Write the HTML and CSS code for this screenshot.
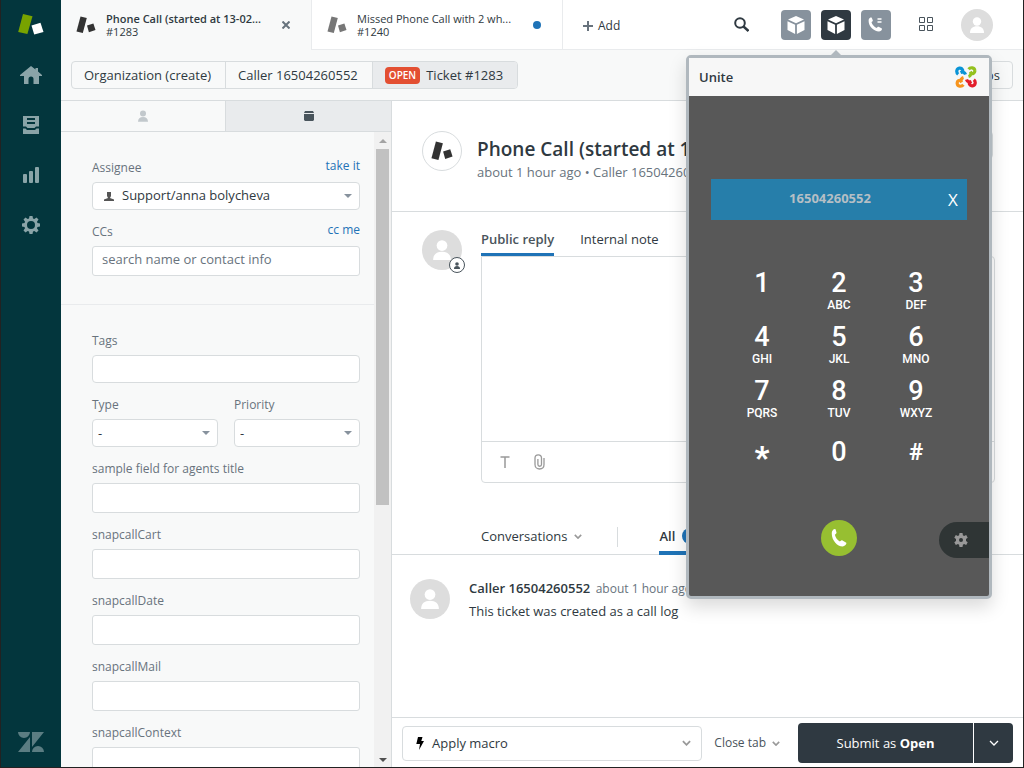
FILE: index.html
```html
<!DOCTYPE html>
<html lang="en">
<head>
<meta charset="utf-8">
<meta name="viewport" content="width=device-width, initial-scale=1">
<title>Ticket #1283</title>
<link rel="stylesheet" href="styles.css">
</head>
<body>
<svg class="defs" aria-hidden="true">
  <symbol id="ticket-mark" viewBox="0 0 20 18">
    <path d="M4.500 0.500 10.800 2 6.800 17 0.500 15.500z"/>
    <path d="M11 9.400 17.400 7.400 19.500 14 12.900 16.200z"/>
  </symbol>
  <symbol id="person" viewBox="0 0 16 18">
    <circle cx="8" cy="5" r="4.8"/><path d="M0 18c0-5 3-7.500 8-7.500s8 2.500 8 7.500z"/>
  </symbol>
  <symbol id="chevron" viewBox="0 0 10 6">
    <path d="M1 1l4 4 4-4" fill="none" stroke="currentColor" stroke-width="2"/>
  </symbol>
  <symbol id="cube" viewBox="0 0 18 18">
    <path d="M9 0l8 3.500L9 7.300 1 3.500zM.5 5.200l7.600 3.600V18L.5 14zM17.500 5.200L9.900 8.800V18l7.600-4z"/>
  </symbol>
  <symbol id="gear" viewBox="0 0 18 18">
    <path fill-rule="evenodd" d="M7.500 0h3l.5 2.500 1.300.6L14.500 1.600l2 2L15 5.700l.5 1.300 2.500.5v3l-2.500.5-.6 1.300 1.600 2.200-2 2-2.200-1.500-1.300.5-.5 2.500h-3L7 15.500l-1.300-.6-2.200 1.600-2-2L3 12.300 2.500 11 0 10.500v-3L2.500 7l.6-1.300-1.600-2.200 2-2L5.700 3 7 2.500zM9 5a4 4 0 100 8 4 4 0 000-8z"/>
  </symbol>
  <symbol id="cog" viewBox="0 0 14 14">
    <path fill-rule="evenodd" d="M5.500 0h3l.4 2.200 1.200.7 2.100-.8 1.500 2.600L12 6.100v1.800l1.700 1.400-1.500 2.600-2.100-.8-1.200.7-.4 2.200h-3l-.4-2.200-1.200-.7-2.100.8L.3 9.300 2 7.900V6.100L.3 4.700l1.500-2.600 2.100.8 1.200-.7zM7 5a2 2 0 100 4 2 2 0 000-4z"/>
  </symbol>
  <symbol id="handset" viewBox="0 0 16 18">
    <path d="M1 2.500C2 .5 3.500-.3 4.500.2l1 3.300c.2 1-.8 1.600-1.600 2.300.6 2.800 2.500 5.400 5 6.800.9-.8 1.600-1.500 2.600-1.200l3.800 2.400c.6 1.600-1.600 3.600-3.600 3.700C5.500 17.500-.5 9.500 1 2.500z"/>
  </symbol>
</svg>
<div class="window">
  <nav class="rail" aria-label="Main">
    <a href="#" class="rail-logo" aria-label="Support"><svg width="26" height="22" viewBox="0 0 26 22"><path fill="#78a300" d="M5 0l9.500 2.200L9.400 20 .2 18z"/><path fill="#fff" d="M13.500 11.400l9-2.600L25.500 18l-9.300 2.400z"/></svg></a>
    <a href="#" aria-label="Home"><svg width="22" height="18" viewBox="0 0 22 18"><path d="M11 0l4.500 3.400V2H18v3.400l4 3.600v1h-3v8h-5.500v-5a2.500 2.500 0 00-5 0v5H4v-8H0V9z"/></svg></a>
    <a href="#" aria-label="Views"><svg width="16" height="18" viewBox="0 0 16 18"><path fill-rule="evenodd" d="M0 0h16v10.500h-3L11.500 12h-7L3 10.500H0zM4 2v2h8V2zM4 6v2h8V6zM0 12.500h2.500L4 14h8l1.500-1.500H16V18H0z"/></svg></a>
    <a href="#" aria-label="Reporting"><svg width="16" height="16" viewBox="0 0 16 16"><rect y="7" width="4" height="9" rx="1"/><rect x="6" y="4" width="4" height="12" rx="1"/><rect x="12" width="4" height="16" rx="1"/></svg></a>
    <a href="#" aria-label="Admin"><svg width="18" height="18"><use href="#gear"/></svg></a>
    <a href="#" class="rail-brand" aria-label="Zendesk"><svg width="26" height="20" viewBox="0 0 26 20"><path d="M0 0h12a6 6 0 01-12 0zM12 5v15H0zM14 0h12L14 15zM14 20a6 6 0 0112 0z"/></svg></a>
  </nav>
  <div class="app">
    <header class="topbar">
      <div class="tab tab-active">
        <svg class="mark" width="20" height="18"><use href="#ticket-mark"/></svg>
        <a href="#" class="tab-text"><b>Phone Call (started at 13-02...</b><span>#1283</span></a>
        <button class="tab-close" aria-label="Close"><svg width="8" height="8" viewBox="0 0 8 8"><path d="M.5.5l7 7M7.500.5l-7 7" stroke="currentColor" stroke-width="2"/></svg></button>
      </div>
      <div class="tab">
        <svg class="mark" width="20" height="18"><use href="#ticket-mark"/></svg>
        <a href="#" class="tab-text"><span class="tab-name">Missed Phone Call with 2 wh...</span><span>#1240</span></a>
        <i class="unread"></i>
      </div>
      <div class="tools">
        <button class="add"><svg width="10" height="10" viewBox="0 0 10 10"><path d="M5 0v10M0 5h10" stroke="#68737d" stroke-width="2"/></svg>Add</button>
        <button class="search" aria-label="Search"><svg width="15" height="15" viewBox="0 0 15 15" fill="none" stroke="currentColor" stroke-width="2"><circle cx="6" cy="6" r="4.800"/><path d="M9.500 9.500l5 4.500" stroke-width="2.400"/></svg></button>
        <div class="squares">
          <button class="square" aria-label="App"><svg width="18" height="18"><use href="#cube"/></svg></button>
          <button class="square square-on" aria-label="Unite"><svg width="18" height="18"><use href="#cube"/></svg></button>
          <button class="square" aria-label="Talk"><svg width="16" height="16" viewBox="0 0 16 16"><path d="M.8 2.300C1.500.8 2.500.2 3.600.5l1.200 2.800c.2.9-.7 1.300-1.300 2 .6 2.300 2.700 4.600 5.100 5.600.7-.6 1.200-1.400 2-1.200l3.300 1.800c.4 1.500-1.300 3-3 3C5.500 14.500-.5 8.500.8 2.300z"/><path d="M9.500 2h4M9.500 5h4" stroke="#fff" stroke-width="1.500"/></svg></button>
        </div>
        <button class="products" aria-label="Products"><svg width="15" height="15" viewBox="0 0 15 15" fill="none" stroke="currentColor"><path d="M.5.5h5v5h-5zM8.500.5h5v5h-5zM.5 8.500h5v5h-5zM8.500 8.500h5v5h-5z"/></svg></button>
        <button class="avatar avatar-small" aria-label="Profile"><svg width="14" height="16"><use href="#person"/></svg></button>
      </div>
    </header>
    <div class="crumbs">
      <div class="crumb-group">
        <a href="#">Organization (create)</a><a href="#">Caller 16504260552</a><a href="#" class="crumb-on"><span class="status">OPEN</span>Ticket #1283</a>
      </div>
      <button class="outline">Apps</button>
    </div>
    <div class="workspace">
      <aside class="side">
        <div class="side-tabs">
          <button aria-label="User"><svg width="10" height="12"><use href="#person"/></svg></button>
          <button class="side-on" aria-label="Ticket"><svg width="10" height="10" viewBox="0 0 10 10"><path d="M1 0h8l1 2H0zM0 3h10v6l-1 1H1L0 9z"/></svg></button>
        </div>
        <div class="side-scroll">
          <form class="fields">
            <div class="group">
              <div class="field">
                <div class="label-row"><label for="assignee">Assignee</label><a href="#">take it</a></div>
                <div class="select assignee"><select id="assignee"><option>Support/anna bolycheva</option></select><svg width="10" height="9" viewBox="0 0 10 9"><path d="M3 0h4v4L6 6l4 1.500V9H0V7.500L4 6 3 4z"/></svg></div>
              </div>
              <div class="field">
                <div class="label-row"><label for="ccs">CCs</label><a href="#">cc me</a></div>
                <input id="ccs" class="tall" placeholder="search name or contact info">
              </div>
            </div>
            <div class="group">
              <div class="field"><label for="tags">Tags</label><input id="tags"></div>
              <div class="pair">
                <div class="field"><label for="type">Type</label><div class="select"><select id="type"><option>-</option></select></div></div>
                <div class="field"><label for="priority">Priority</label><div class="select"><select id="priority"><option>-</option></select></div></div>
              </div>
              <div class="field"><label for="sample">sample field for agents title</label><input id="sample" class="tall"></div>
              <div class="field"><label for="cart">snapcallCart</label><input id="cart" class="tall"></div>
              <div class="field"><label for="date">snapcallDate</label><input id="date" class="tall"></div>
              <div class="field"><label for="mail">snapcallMail</label><input id="mail" class="tall"></div>
              <div class="field"><label for="context">snapcallContext</label><input id="context" class="tall"></div>
            </div>
          </form>
          <div class="scrollbar"><i class="up"></i><div class="track"><div class="thumb"></div></div><i class="down"></i></div>
        </div>
      </aside>
      <main class="ticket">
        <section class="ticket-head">
          <div class="ticket-icon mark"><svg width="24" height="20" viewBox="0 0 20 18"><use href="#ticket-mark"/></svg></div>
          <div class="ticket-title"><h1>Phone Call (started at 13-02</h1><p>about 1 hour ago • Caller 16504260552</p></div>
          <button class="outline ticket-menu" aria-label="Ticket options"></button>
        </section>
        <section class="composer">
          <div class="avatar"><svg width="18" height="20"><use href="#person"/></svg><span class="avatar-badge"><svg width="6" height="7"><use href="#person"/></svg></span></div>
          <div class="composer-main">
            <div class="reply-tabs"><button class="reply-on">Public reply</button><button>Internal note</button></div>
            <div class="editor">
              <textarea aria-label="Public reply"></textarea>
              <div class="editor-tools">
                <button aria-label="Text options"><svg width="10" height="12" viewBox="0 0 10 12" fill="none" stroke="currentColor" stroke-width="1.500"><path d="M.5 1h9M5 1v11"/></svg></button>
                <button aria-label="Attach"><svg width="11" height="16" viewBox="0 0 11 16" fill="none" stroke="currentColor" stroke-width="1.300"><path d="M10 4v6.500c0 6-9 6-9 0V4c0-4.300 6.500-4.300 6.500 0v6.500c0 2.300-3.600 2.300-3.600 0V5"/></svg></button>
              </div>
            </div>
          </div>
        </section>
        <div class="conversation-bar">
          <button class="conversations">Conversations <svg width="8" height="5"><use href="#chevron"/></svg></button>
          <button class="all">All <span class="count">1</span></button>
        </div>
        <article class="comment">
          <div class="avatar"><svg width="18" height="20"><use href="#person"/></svg></div>
          <div><p><b>Caller 16504260552</b> <time>about 1 hour ago</time></p><p>This ticket was created as a call log</p></div>
        </article>
        <footer class="actions">
          <button class="macro"><svg width="8" height="13" viewBox="0 0 8 13"><path d="M2 0h4.500L5.300 4H8L3 13l1-6H.3z"/></svg><span>Apply macro</span><svg class="chev" width="9" height="6"><use href="#chevron"/></svg></button>
          <button class="close-tab">Close tab <svg class="chev" width="8" height="5"><use href="#chevron"/></svg></button>
          <div class="submit"><button>Submit as&nbsp;<b>Open</b></button><button aria-label="Submit options"><svg width="10" height="6" viewBox="0 0 10 6"><path d="M1 1l4 4 4-4" fill="none" stroke="currentColor" stroke-width="1.300"/></svg></button></div>
        </footer>
      </main>
    </div>
  </div>
  <section class="popup" aria-label="Unite">
    <header class="popup-head"><h2>Unite</h2>
      <svg width="22" height="22" viewBox="0 0 22 22" fill="none" stroke-width="3.200">
        <path stroke="#0a94d6" d="M3.200 8.300C.8 6.300 1.600 2.600 4.400 2.200c2.900-.4 4.100 2.300 2.700 4.100M5.500 6.500c2-.9 4.300-.3 5 2"/>
        <path stroke="#95c11f" d="M13.600 3.200c2-2.400 5.900-1.600 6.200 1.200.4 2.900-2.400 4.100-4.200 2.700M15.500 5.500c.9 2 .3 4.300-2 5"/>
        <path stroke="#e31e2b" d="M18.800 13.700c2.400 2 1.600 5.700-1.200 6.100-2.900.4-4.100-2.300-2.700-4.100M16.500 15.500c-2 .9-4.300.3-5-2"/>
        <path stroke="#f7941d" d="M8.400 18.800c-2 2.400-5.900 1.600-6.200-1.200-.4-2.900 2.400-4.100 4.200-2.700M6.500 16.500c-.9-2-.3-4.300 2-5"/>
      </svg>
    </header>
    <div class="phone">
      <div class="number"><output>16504260552</output><button aria-label="Clear">X</button></div>
      <div class="keys">
        <button>1</button><button>2<small>ABC</small></button><button>3<small>DEF</small></button>
        <button>4<small>GHI</small></button><button>5<small>JKL</small></button><button>6<small>MNO</small></button>
        <button>7<small>PQRS</small></button><button>8<small>TUV</small></button><button>9<small>WXYZ</small></button>
        <button class="low symbol star">*</button><button class="low">0</button><button class="low symbol">#</button>
      </div>
      <button class="call" aria-label="Call"><svg width="16" height="18"><use href="#handset"/></svg></button>
      <button class="settings" aria-label="Settings"><svg width="14" height="14"><use href="#cog"/></svg></button>
    </div>
  </section>
</div>
</body>
</html>
```
FILE: styles.css
```css
* { box-sizing: border-box; }
body {
  margin: 0;
  font: 13px/20px "Open Sans", "Noto Sans", sans-serif;
  color: #2f3941;
}
button, input, select, textarea { font: inherit; color: inherit; margin: 0; }
button { border: 0; padding: 0; background: none; display: flex; align-items: center; justify-content: center; white-space: nowrap; }
a { color: inherit; text-decoration: none; }
h1, h2, p { margin: 0; }
svg { flex: none; display: block; }
svg:not([fill]) { fill: currentColor; }
.defs { position: absolute; width: 0; height: 0; }

.window {
  position: relative;
  display: flex;
  height: 100vh;
  overflow: hidden;
  background: #fff;
  border: solid #222;
  border-width: 0 1px 1px;
}

/* Navigation rail */
.rail {
  flex: none;
  width: 60px;
  display: flex;
  flex-direction: column;
  background: #03363d;
  color: #8aa4a8;
}
.rail a { height: 50px; display: flex; align-items: center; justify-content: center; }
.rail .rail-brand { margin-top: auto; color: #5b7d82; }

.app { flex: 1; min-width: 0; display: flex; flex-direction: column; }

/* Top bar */
.topbar { flex: none; height: 50px; display: flex; }
.tab {
  width: 251px;
  flex: none;
  display: flex;
  align-items: center;
  padding: 0 21px 0 15px;
  border: solid #e9ebed;
  border-width: 0 0 1px 1px;
}
.tab-active { width: 250px; padding-right: 19px; background: #f8f9f9; border: 0; }
.mark { color: #777; }
.tab-active .mark, .ticket-icon { color: #333; }
.tab-text { flex: 1; margin-left: 10px; font-size: 11px; line-height: 13px; display: grid; white-space: nowrap; }
.tab-text b { font-weight: 600; }
.tab-close { width: 12px; color: #68737d; }
.unread { width: 8px; height: 8px; border-radius: 50%; background: #1f73b7; }
.tools {
  flex: 1;
  display: flex;
  align-items: center;
  padding: 0 30px 0 20px;
  border: solid #e9ebed;
  border-width: 0 0 1px 1px;
}
.add { gap: 5px; font-size: 12px; margin-right: auto; padding-top: 3px; }
.search { margin-right: 32px; }
.squares { display: flex; gap: 10px; margin-right: 28px; }
.square { width: 30px; height: 30px; border-radius: 4px; background: #87929d; color: #fff; }
.square-on { background: #2f3941; }
.products { margin-right: 27px; color: #49545c; }
.avatar {
  position: relative;
  flex: none;
  width: 40px;
  height: 40px;
  border-radius: 50%;
  background: #ddd;
  color: #fff;
  display: flex;
  align-items: center;
  justify-content: center;
}
.avatar-small { width: 32px; height: 32px; }

/* Breadcrumbs */
.crumbs {
  flex: none;
  height: 51px;
  display: flex;
  align-items: center;
  justify-content: space-between;
  padding: 0 10px;
  background: #f8f9f9;
  border-bottom: 1px solid #d8dcde;
}
.crumb-group { display: flex; height: 28px; border: 1px solid #d8dcde; border-radius: 4px; overflow: hidden; }
.crumb-group a { display: flex; align-items: center; padding: 0 14px 0 12px; white-space: nowrap; }
.crumb-group a + a { border-left: 1px solid #d8dcde; }
.crumb-group .crumb-on { background: #e9ebed; }
.status { background: #e34f32; color: #fff; border-radius: 4px; padding: 0 4px; margin-right: 6px; font-size: 10px; line-height: 17px; font-weight: 600; }
.outline { height: 28px; padding: 0 12px; border: 1px solid #d8dcde; border-radius: 4px; }

/* Ticket properties */
.workspace { flex: 1; min-height: 0; display: flex; }
.side { flex: none; width: 331px; display: flex; flex-direction: column; background: #f8f9f9; border-right: 1px solid #d8dcde; }
.side-tabs { flex: none; display: grid; grid-template-columns: 164px 1fr; height: 31px; border-bottom: 1px solid #d8dcde; }
.side-tabs button { color: #c2c8cc; }
.side-tabs .side-on { background: #e9ebed; border-left: 1px solid #d8dcde; color: #49545c; }
.side-scroll { flex: 1; min-height: 0; display: flex; overflow: hidden; }
.fields { flex: 1; min-width: 0; }
.group { display: grid; gap: 12px; padding: 26px 14px 28px 31px; }
.group + .group { border-top: 1px solid #e9ebed; }
.field { display: grid; gap: 4px; color: #68737d; font-size: 12px; min-width: 0; }
.label-row { display: flex; justify-content: space-between; }
.label-row a { color: #1f73b7; line-height: 16px; }
.pair { display: grid; grid-template-columns: 1fr 1fr; gap: 16px; }
.field input, .select select {
  width: 100%;
  height: 28px;
  border: 1px solid #d8dcde;
  border-radius: 4px;
  background: #fff;
  padding: 0 9px 4px;
  font-size: 13px;
  color: #2f3941;
}
.field .tall { height: 30px; border-radius: 3px; }
.field input::placeholder { color: #68737d; opacity: 1; }
.select { display: grid; align-items: center; }
.select > *, .select::after { grid-area: 1 / 1; }
.select select { appearance: none; padding: 0 5px; }
.select::after { content: ""; justify-self: end; margin-right: 8px; border: solid transparent; border-width: 4px 4px 0; border-top-color: #87929d; pointer-events: none; }
.select.assignee select { padding: 0 29px 2px; }
.assignee svg { margin-left: 12px; color: #555; }
.scrollbar { width: 17px; display: flex; flex-direction: column; align-items: center; justify-content: space-between; padding: 7px 2px 5px; background: #f1f1f1; }
.up, .down { border: solid transparent; border-width: 0 4px 4px; border-bottom-color: #a3a3a3; }
.down { border-width: 4px 4px 0; border-top-color: #505050; }
.track { flex: 1; width: 100%; margin: 6px 0; }
.thumb { height: 59%; background: #c1c1c1; }

/* Ticket */
.ticket { flex: 1; min-width: 0; display: flex; flex-direction: column; }
.ticket-head { flex: none; display: flex; gap: 15px; padding: 30px; height: 111px; border-bottom: 1px solid #d8dcde; }
.ticket-icon { flex: none; width: 40px; height: 40px; border: 1px solid #d8dcde; border-radius: 50%; display: flex; align-items: center; justify-content: center; }
.ticket-title { flex: 1; min-width: 0; padding-top: 6px; white-space: nowrap; }
.ticket-title h1 { font-size: 19px; line-height: 24px; font-weight: 600; }
.ticket-title p { line-height: 22px; color: #68737d; }
.ticket-menu { width: 32px; }
.composer { flex: none; display: flex; gap: 19px; padding: 18px 28px 0 30px; }
.avatar-badge { position: absolute; right: -3px; bottom: -3px; width: 16px; height: 16px; border: 1px solid #49545c; border-radius: 50%; background: #fff; color: #49545c; display: flex; align-items: center; justify-content: center; }
.composer-main { flex: 1; min-width: 0; }
.reply-tabs { display: flex; gap: 26px; }
.reply-tabs button { height: 26px; padding-bottom: 8px; }
.reply-tabs .reply-on { font-weight: 600; color: #49545c; border-bottom: 3px solid #1f73b7; padding-bottom: 5px; }
.editor { border: 1px solid #d8dcde; border-radius: 0 4px 4px 4px; }
.editor textarea { display: block; width: 100%; height: 184px; border: 0; resize: none; outline: 0; background: none; }
.editor-tools { height: 41px; display: flex; gap: 24px; padding: 0 18px; border-top: 1px solid #d8dcde; color: #999; }
.conversation-bar { flex: none; height: 38px; margin-top: 34px; display: flex; padding-left: 89px; border-bottom: 1px solid #d8dcde; }
.conversations { gap: 7px; height: 20px; margin-top: 10px; padding: 0 35px 2px 0; border-right: 1px solid #d8dcde; }
.conversations svg, .chev { color: #999; }
.all { gap: 7px; margin-left: 41px; height: 38px; border-bottom: 4px solid #1f73b7; padding-top: 3px; font-weight: 600; }
.count { min-width: 18px; border-radius: 9px; background: #1f73b7; color: #fff; font-size: 11px; line-height: 16px; }
.comment { flex: 1; min-height: 0; display: flex; gap: 19px; padding: 24px 18px; }
.comment p { line-height: 20px; margin-bottom: 3px; }
.comment p:first-child { line-height: 18px; }
.comment b { font-weight: 600; }
.comment time { font-size: 12px; color: #68737d; margin-left: 2px; }
.actions { flex: none; display: flex; align-items: center; padding: 5px 10px 4px; border-top: 1px solid #d8dcde; }
.macro { flex: 1; height: 35px; gap: 8px; padding: 0 10px 0 13px; border: 1px solid #d8dcde; border-radius: 4px; }
.macro span { margin-right: auto; }
.macro > svg:first-child { color: #000; }
.close-tab { margin: 0 18px 0 12px; gap: 6px; font-size: 12px; color: #49545c; }
.submit { display: flex; height: 40px; border-radius: 4px; overflow: hidden; background: #2f3941; color: #fff; }
.submit button { min-width: 175px; padding: 0 38px; }
.submit button + button { min-width: 40px; padding: 0; border-left: 1px solid #fff; }

/* Softphone popup */
.popup {
  position: absolute;
  top: 55px;
  right: 31px;
  width: 306px;
  border: 3px solid #b0b8be;
  border-radius: 5px;
  background: #585858;
  box-shadow: 0 8px 18px rgba(0, 0, 0, .15);
}
.popup::before { content: ""; position: absolute; left: 50%; bottom: 100%; margin: 0 0 3px -8px; border: solid transparent; border-width: 0 5px 5px; border-bottom-color: #b0b8be; }
.popup-head { display: flex; align-items: center; justify-content: space-between; height: 38px; padding: 0 12px 0 10px; background: #f7f7f7; }
.popup-head h2 { font-size: 13px; font-weight: 600; }
.phone { display: flex; flex-direction: column; align-items: center; height: 500px; padding: 83px 22px 40px; color: #fff; position: relative; }
.number { width: 100%; height: 41px; display: flex; align-items: center; background: #267eaa; }
.number output { flex: 1; padding: 0 0 3px 10px; text-align: center; font-size: 13px; font-weight: 700; color: #b5bfc5; }
.number button { font-size: 17px; width: 28px; }
.keys { display: grid; grid-template-columns: repeat(3, 77px); grid-auto-rows: 54px; margin-top: 48px; }
.keys button { flex-direction: column; justify-content: flex-start; font: 500 27px/31px Roboto, sans-serif; }
.keys small { font-size: 12px; line-height: 12px; }
.keys .low { padding-top: 7px; }
.keys .symbol { font-size: 24px; font-weight: 700; }
.keys .star { font-size: 32px; line-height: 40px; font-weight: 900; }
.call { width: 36px; height: 36px; margin-top: auto; border-radius: 50%; background: #97bf31; }
.settings { position: absolute; right: 0; bottom: 38px; width: 50px; height: 36px; padding-right: 6px; border-radius: 18px 0 0 18px; background: #2f3535; color: #999; }
```
